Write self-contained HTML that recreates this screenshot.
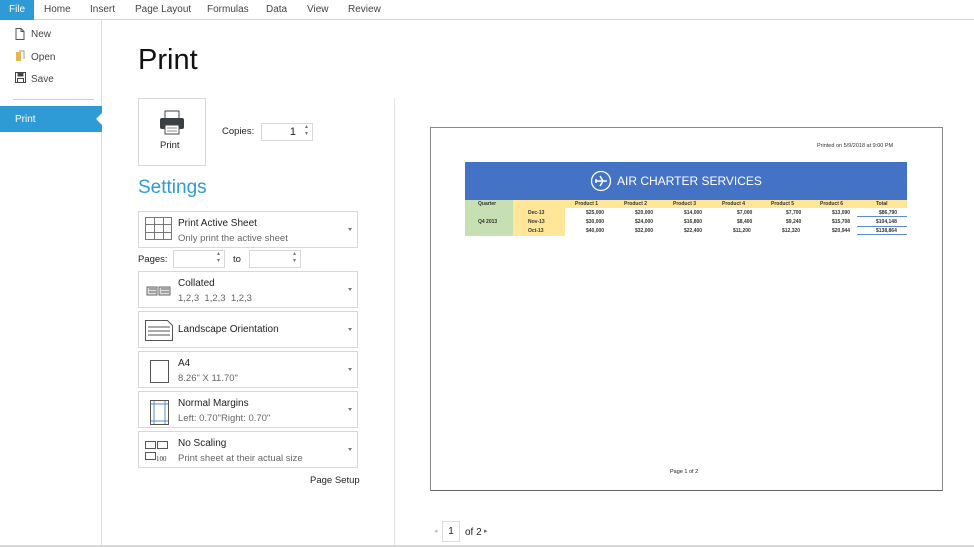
<!DOCTYPE html>
<html><head><meta charset="utf-8"><style>
*{box-sizing:border-box;margin:0;padding:0}
body{width:974px;height:547px;background:#fff;font-family:"Liberation Sans",sans-serif;position:relative;overflow:hidden;color:#222}
.a{position:absolute}
.top{left:0;top:0;width:974px;height:20px;border-bottom:1px solid #d4d4d4}
.tab{position:absolute;top:4px;font-size:10px;color:#444}
.dd{position:absolute;left:138px;width:220px;border:1px solid #d8d8d8;height:37px}
.dd .t{position:absolute;left:39px;top:6px;font-size:10px;color:#222}
.dd .s{position:absolute;left:39px;top:21px;font-size:9.5px;color:#666}
.dd .ar{position:absolute;right:5px;top:16px;width:0;height:0;border-left:2.5px solid transparent;border-right:2.5px solid transparent;border-top:3px solid #777}
.dd svg{position:absolute;left:6px;top:5px}
.spin{position:absolute;border:1px solid #d8d8d8;height:18px;background:#fff}
.tbl{position:absolute;font-size:5px;font-weight:bold;color:#333}
</style></head><body>
<div class="a top"></div>
<div class="a" style="left:0;top:0;width:34px;height:20px;background:#2e9bd6;color:#fff;font-size:10px;padding:4px 0 0 9px">File</div>
<div class="tab" style="left:44px">Home</div>
<div class="tab" style="left:90px">Insert</div>
<div class="tab" style="left:135px">Page Layout</div>
<div class="tab" style="left:207px">Formulas</div>
<div class="tab" style="left:266px">Data</div>
<div class="tab" style="left:307px">View</div>
<div class="tab" style="left:348px">Review</div>
<div class="a" style="left:101px;top:20px;width:1px;height:527px;background:#dcdcdc"></div>
<svg class="a" style="left:15px;top:28px" width="10" height="12"><path d="M1 .5h5l3 3v8H1z M6 .5v3h3" fill="#fff" stroke="#555"/></svg>
<div class="a" style="left:31px;top:29px;font-size:10px;color:#444">New</div>
<svg class="a" style="left:15px;top:50px" width="11" height="12"><path d="M1 2h5v9H1z" fill="#e8b552"/><path d="M4 1h5v8" fill="none" stroke="#999"/></svg>
<div class="a" style="left:31px;top:52px;font-size:10px;color:#444">Open</div>
<svg class="a" style="left:15px;top:72px" width="11" height="11"><rect x=".5" y=".5" width="10" height="10" fill="#fff" stroke="#444"/><rect x="2.5" y=".5" width="6" height="4" fill="#444"/><rect x="2.5" y="6.5" width="6" height="4" fill="#fff" stroke="#444"/></svg>
<div class="a" style="left:31px;top:74px;font-size:10px;color:#444">Save</div>
<div class="a" style="left:13px;top:99px;width:81px;height:1px;background:#ccc"></div>
<div class="a" style="left:0;top:106px;width:102px;height:26px;background:#2e9bd6;color:#fff;font-size:10px;padding:8px 0 0 15px">Print</div>
<div class="a" style="left:96px;top:113px;width:0;height:0;border-top:6px solid transparent;border-bottom:6px solid transparent;border-right:6px solid #fff"></div>
<div class="a" style="left:138px;top:44px;font-size:29px;color:#111">Print</div>
<div class="a" style="left:138px;top:98px;width:68px;height:68px;border:1px solid #d8d8d8"></div>
<svg class="a" style="left:158px;top:110px" width="28" height="26"><rect x="7" y="1" width="14" height="8" fill="#fff" stroke="#444" stroke-width="1"/><rect x="2" y="8" width="24" height="11" rx="2" fill="#3a3f44"/><rect x="7" y="15" width="14" height="9" fill="#fff" stroke="#444"/><path d="M9 18h10M9 21h10" stroke="#888"/></svg>
<div class="a" style="left:160px;top:140px;font-size:9.5px">Print</div>
<div class="a" style="left:222px;top:126px;font-size:9.5px">Copies:</div>
<div class="spin" style="left:261px;top:123px;width:52px"><span style="position:absolute;right:16px;top:2px;font-size:11px">1</span><span style="position:absolute;right:4px;top:0;font-size:6px;color:#777;line-height:7px">▴<br>▾</span></div>
<div class="a" style="left:138px;top:177px;font-size:19px;color:#2e9bd6">Settings</div>
<div class="dd" style="top:211px"><svg width="28" height="28"><path d="M.5 .5h26v22h-26z M.5 7.5h26 M.5 15.5h26 M9.5 .5v22 M18.5 .5v22" fill="none" stroke="#777"/></svg><div class="t">Print Active Sheet</div><div class="s">Only print the active sheet</div><div class="ar"></div></div>
<div class="a" style="left:138px;top:254px;font-size:9.5px">Pages:</div>
<div class="spin" style="left:173px;top:250px;width:52px"><span style="position:absolute;right:4px;top:0;font-size:6px;color:#777;line-height:7px">▴<br>▾</span></div>
<div class="a" style="left:233px;top:254px;font-size:9.5px">to</div>
<div class="spin" style="left:249px;top:250px;width:52px"><span style="position:absolute;right:4px;top:0;font-size:6px;color:#777;line-height:7px">▴<br>▾</span></div>
<div class="dd" style="top:271px"><svg width="28" height="26"><path d="M2 10h10v8H2z M14 10h11v8H14z M4 12h7 M16 12h8 M4 15h7 M16 15h8" fill="#ddd" stroke="#666"/></svg><div class="t">Collated</div><div class="s">1,2,3 &nbsp;1,2,3 &nbsp;1,2,3</div><div class="ar"></div></div>
<div class="dd" style="top:311px"><svg width="30" height="26"><path d="M.5 3.5h22l5 5v15H.5z M3 10h22 M3 14h22 M3 18h22" fill="#fff" stroke="#555"/></svg><div class="t" style="top:12px">Landscape Orientation</div><div class="ar"></div></div>
<div class="dd" style="top:351px"><svg width="28" height="28"><rect x="5.5" y="3.5" width="18" height="22" fill="#fff" stroke="#555"/></svg><div class="t">A4</div><div class="s">8.26" X 11.70"</div><div class="ar"></div></div>
<div class="dd" style="top:391px"><svg width="28" height="28"><rect x="5.5" y="3.5" width="18" height="24" fill="#fff" stroke="#555"/><path d="M9 4v23 M20 4v23 M6 7h17 M6 24h17" stroke="#5b8bd0"/></svg><div class="t">Normal Margins</div><div class="s">Left: 0.70"Right: 0.70"</div><div class="ar"></div></div>
<div class="dd" style="top:431px"><svg width="30" height="28"><path d="M.5 4.5h10v7h-10z M12.5 4.5h10v7h-10z M.5 15.5h10v7h-10z" fill="#fff" stroke="#555"/><text x="11" y="24" font-size="7" font-family="Liberation Serif" fill="#333">100</text></svg><div class="t">No Scaling</div><div class="s">Print sheet at their actual size</div><div class="ar"></div></div>
<div class="a" style="left:310px;top:475px;font-size:9.5px">Page Setup</div>
<div class="a" style="left:394px;top:98px;width:1px;height:449px;background:#e2e2e2"></div>
<div class="a" style="left:430px;top:127px;width:513px;height:364px;border:1px solid #888;border-bottom-color:#666"></div>
<div class="a" style="left:817px;top:143px;font-size:5.5px;color:#333">Printed on 5/9/2018 at 9:00 PM</div>
<div class="a" style="left:465px;top:162px;width:442px;height:38px;background:#4472c4"></div>
<svg class="a" style="left:590px;top:170px" width="22" height="22"><circle cx="11" cy="11" r="9.5" fill="none" stroke="#fff" stroke-width="1.3"/><path d="M5 11h12 M10 6l3 5-3 5 M6 9v4" stroke="#fff" stroke-width="1.5" fill="none"/></svg>
<div class="a" style="left:617px;top:174px;font-size:12px;color:#fff">AIR CHARTER SERVICES</div>
<div class="a" style="left:465px;top:200px;width:442px;height:8px;background:#ffe699"></div>
<div class="a" style="left:465px;top:200px;width:48px;height:36px;background:#c6e0b4"></div>
<div class="a" style="left:513px;top:208px;width:52px;height:28px;background:#ffe699"></div>
<div class="tbl" style="left:478px;top:201px">Quarter</div>
<div class="tbl" style="left:478px;top:219px">Q4 2013</div>
<div class="tbl" style="left:528px;top:210px">Dec-13</div>
<div class="tbl" style="left:528px;top:219px">Nov-13</div>
<div class="tbl" style="left:528px;top:228px">Oct-13</div>
<div class="tbl" style="left:575px;top:201px">Product 1</div><div class="tbl" style="left:624px;top:201px">Product 2</div><div class="tbl" style="left:673px;top:201px">Product 3</div><div class="tbl" style="left:722px;top:201px">Product 4</div><div class="tbl" style="left:771px;top:201px">Product 5</div><div class="tbl" style="left:820px;top:201px">Product 6</div><div class="tbl" style="left:876px;top:201px">Total</div>
<div class="tbl" style="left:586px;top:210px">$25,000</div><div class="tbl" style="left:635px;top:210px">$20,000</div><div class="tbl" style="left:684px;top:210px">$14,000</div><div class="tbl" style="left:737px;top:210px">$7,000</div><div class="tbl" style="left:786px;top:210px">$7,700</div><div class="tbl" style="left:832px;top:210px">$13,090</div><div class="tbl" style="left:879px;top:210px">$86,790</div>
<div class="tbl" style="left:586px;top:219px">$30,000</div><div class="tbl" style="left:635px;top:219px">$24,000</div><div class="tbl" style="left:684px;top:219px">$16,800</div><div class="tbl" style="left:737px;top:219px">$8,400</div><div class="tbl" style="left:786px;top:219px">$9,240</div><div class="tbl" style="left:832px;top:219px">$15,708</div><div class="tbl" style="left:876px;top:219px">$104,148</div>
<div class="tbl" style="left:586px;top:228px">$40,000</div><div class="tbl" style="left:635px;top:228px">$32,000</div><div class="tbl" style="left:684px;top:228px">$22,400</div><div class="tbl" style="left:733px;top:228px">$11,200</div><div class="tbl" style="left:782px;top:228px">$12,320</div><div class="tbl" style="left:832px;top:228px">$20,944</div><div class="tbl" style="left:876px;top:228px">$138,864</div>
<div class="a" style="left:857px;top:216px;width:50px;height:1px;background:#5b8bd0"></div>
<div class="a" style="left:857px;top:226px;width:50px;height:1px;background:#5b8bd0"></div>
<div class="a" style="left:857px;top:234px;width:50px;height:1px;background:#5b8bd0"></div>
<div class="a" style="left:670px;top:469px;font-size:5.5px">Page 1 of 2</div>
<div class="a" style="left:434px;top:527px;font-size:7px;color:#bbb">◂</div>
<div class="a" style="left:442px;top:521px;width:18px;height:21px;border:1px solid #ddd;font-size:10px;text-align:center;padding-top:4px">1</div>
<div class="a" style="left:465px;top:527px;font-size:10px">of 2</div>
<div class="a" style="left:484px;top:527px;font-size:7px;color:#666">▸</div>
<div class="a" style="left:0;top:545px;width:974px;height:2px;background:#d8d8d8"></div>
</body></html>
